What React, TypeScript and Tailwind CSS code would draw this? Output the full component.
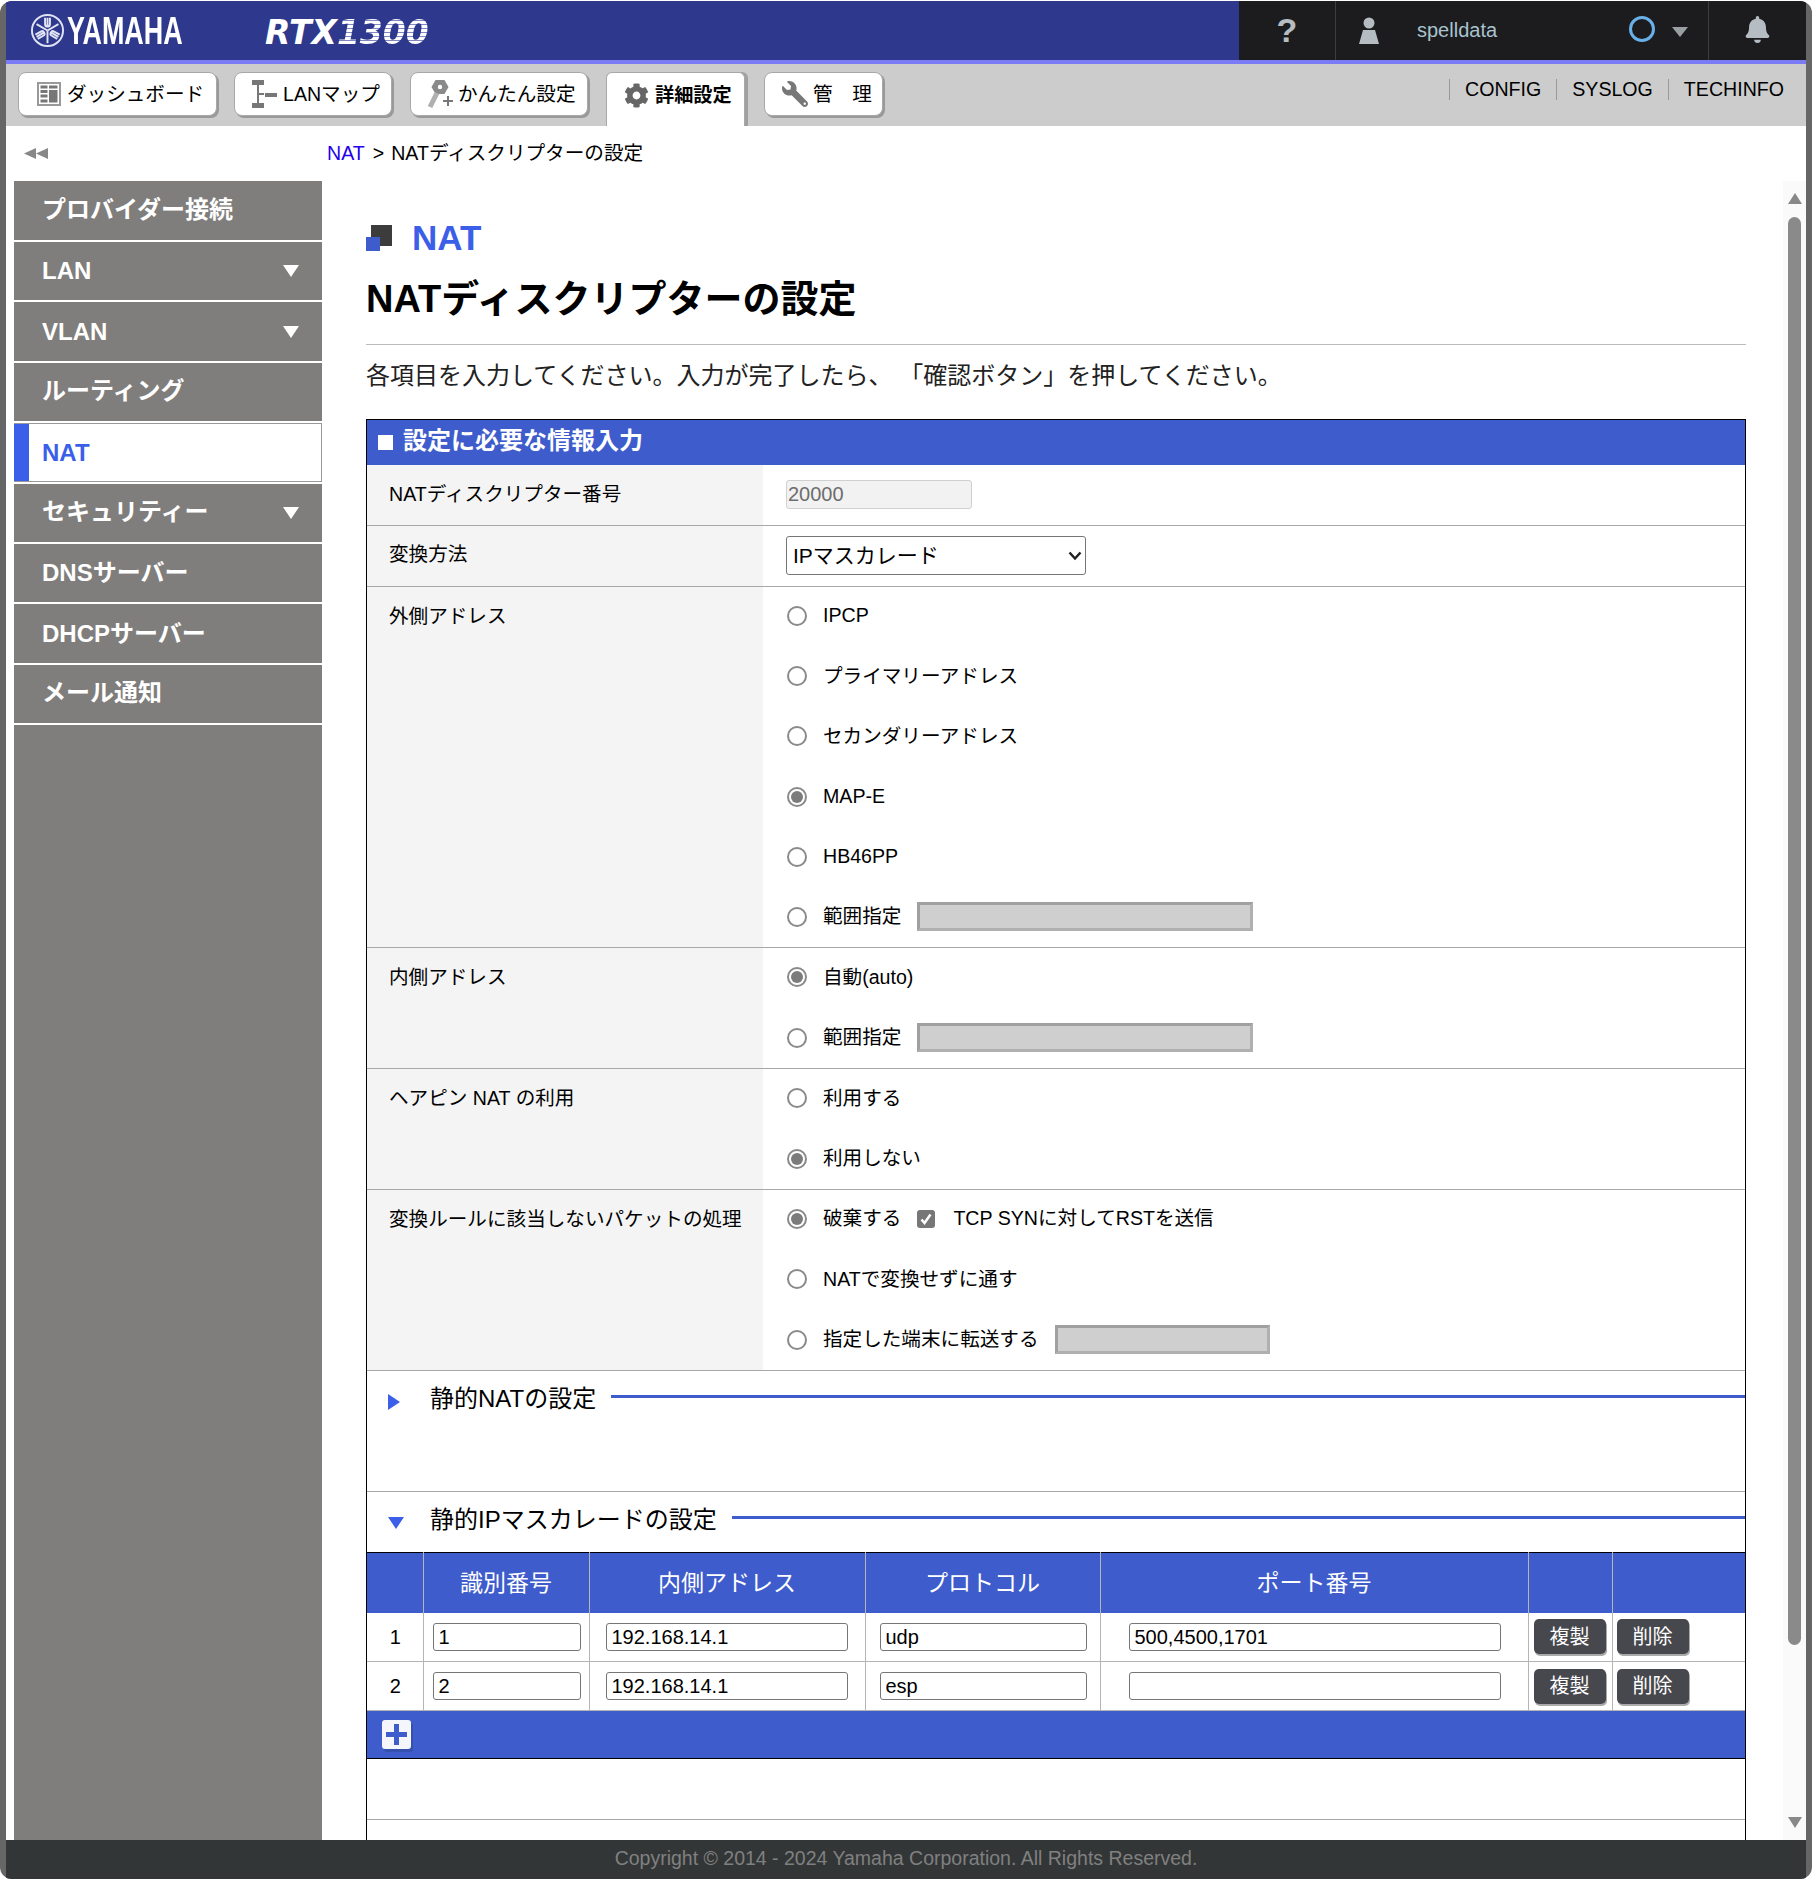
import React from "react";
import { FaCog, FaWrench, FaBell } from "react-icons/fa";

const Tab = ({ w, children }: { w: string; children: React.ReactNode }) => (
  <div className={`${w} h-[44px] bg-white border border-[#a8a8a8] rounded-[8px] shadow-[2px_2px_0_#999] flex items-center text-[19.6px] text-black whitespace-nowrap`}>
    {children}
  </div>
);

const SideItem = ({ label, arrow, active, cjk }: { label: string; arrow?: boolean; active?: boolean; cjk?: boolean }) =>
  active ? (
    <div className="h-[60.4px] bg-white border-b-2 border-white">
      <div className="h-[58.4px] flex items-center border border-[#999] border-l-0 bg-white">
        <div className="w-[15px] h-full bg-[#3b5fe8]" />
        <span className="ml-[13px] pt-[2px] text-[24px] font-bold text-[#3b5fe8]">{label}</span>
      </div>
    </div>
  ) : (
    <div className="h-[60.4px] border-b-2 border-white flex items-center justify-between pl-[28px] pr-[23px]">
      <span className={`${cjk ? "pb-[2px]" : ""} text-[24px] font-bold text-white whitespace-nowrap`}>{label}</span>
      {arrow && <span className="w-0 h-0 border-x-[8px] border-t-[12px] border-x-transparent border-t-white" />}
    </div>
  );

const Radio = ({ checked }: { checked?: boolean }) => (
  <span className="w-[20px] h-[20px] shrink-0 rounded-full border-2 border-[#8a8a8a] bg-white flex items-center justify-center">
    {checked && <span className="w-[12px] h-[12px] rounded-full bg-[#7c7c7c]" />}
  </span>
);

const DisabledBox = ({ w }: { w: string }) => (
  <span className={`${w} h-[29px] block bg-[#cfcfcf] border-[3px] border-t-[#a0a0a0] border-l-[#a0a0a0] border-r-[#b0b0b0] border-b-[#b0b0b0]`} />
);

const Opt = ({ checked, children }: { checked?: boolean; children: React.ReactNode }) => (
  <div className="flex-1 flex items-center pl-[24px] gap-[16px] whitespace-nowrap">
    <Radio checked={checked} />
    {children}
  </div>
);

const Row = ({ h, label, children }: { h: string; label: string; children: React.ReactNode }) => (
  <div className={`${h} flex border-b border-[#a8a8a8]`}>
    <div className="w-[396px] bg-[#f4f4f4] pl-[22px] text-[19.6px] text-black h-full">
      <div className="h-[59px] flex items-center whitespace-nowrap">{label}</div>
    </div>
    <div className="flex-1 -mt-px flex flex-col text-[19.6px] text-black">{children}</div>
  </div>
);

const SectionTitle = ({ label, open }: { label: string; open?: boolean }) => (
  <div className="h-[58px] flex items-center pl-[21px]">
    {open ? (
      <span className="w-0 h-0 border-x-[8px] border-t-[12px] border-x-transparent border-t-[#3b5fe8] mt-[4px]" />
    ) : (
      <span className="w-0 h-0 border-y-[8px] border-l-[12px] border-y-transparent border-l-[#3b5fe8] mt-[4px] mr-[4px]" />
    )}
    <span className="ml-[26px] mb-[2px] text-[24px] text-black whitespace-nowrap">{label}</span>
    <span className="ml-[15px] flex-1 h-[3px] bg-[#3e5ccb] mb-[7px]" />
  </div>
);

const TextIn = ({ w, v }: { w: string; v: string }) => (
  <input
    readOnly
    defaultValue={v}
    className={`${w} h-[28px] block border border-[#767676] rounded-[3px] px-[5px] text-[20px] bg-white text-black`}
  />
);

const Btn = ({ label }: { label: string }) => (
  <button className="w-[72px] h-[35px] bg-[#47484e] rounded-[5px] shadow-[1px_2px_0_#aaa] text-white text-[20px] block">{label}</button>
);

const Th = ({ w, children }: { w: string; children?: React.ReactNode }) => (
  <th className={`${w} border-l border-[#b5b5b5] first:border-l-0 font-normal text-[23px] text-white text-center`}>{children}</th>
);

const DataRow = ({ n, id, addr, proto, port }: { n: string; id: string; addr: string; proto: string; port: string }) => (
  <tr className="h-[49px] border-b border-[#b5b5b5]">
    <td className="text-center text-[20px] text-black pl-[1px]">{n}</td>
    <td className="border-l border-[#b5b5b5] pl-[9px]"><TextIn w="w-[148px]" v={id} /></td>
    <td className="border-l border-[#b5b5b5] pl-[16px]"><TextIn w="w-[242px]" v={addr} /></td>
    <td className="border-l border-[#b5b5b5] pl-[14px]"><TextIn w="w-[207px]" v={proto} /></td>
    <td className="border-l border-[#b5b5b5] pl-[28px]"><TextIn w="w-[372px]" v={port} /></td>
    <td className="border-l border-[#b5b5b5] pl-[5px]"><Btn label="複製" /></td>
    <td className="border-l border-[#b5b5b5] pl-[4px]"><Btn label="削除" /></td>
  </tr>
);

export default function App() {
  return (
    <div className="w-[1812px] h-[1879px] pt-px bg-white overflow-hidden font-['Liberation_Sans','Noto_Sans_CJK_JP',sans-serif]">
      <div className="h-full rounded-[12px] bg-[#666] px-[6px] flex flex-col overflow-hidden">
        {/* top bar */}
        <header className="h-[59px] shrink-0 flex">
          <div className="w-[1233px] bg-[#2e388c] flex items-center">
            <svg width="35" height="35" viewBox="0 0 36 36" className="ml-[24px] shrink-0" fill="none" stroke="#dfe3f3">
              <circle cx="18" cy="18" r="16" strokeWidth="2" />
              <g strokeWidth="2">
                <path d="M18 18V31M15.5 5v6.5q0 2.5 2.5 2.5t2.5-2.5V5M18 5v9" />
                <path d="M18 18V31M15.5 5v6.5q0 2.5 2.5 2.5t2.5-2.5V5M18 5v9" transform="rotate(120 18 18)" />
                <path d="M18 18V31M15.5 5v6.5q0 2.5 2.5 2.5t2.5-2.5V5M18 5v9" transform="rotate(240 18 18)" />
              </g>
            </svg>
            <div className="w-[118px] ml-[2px] shrink-0">
              <span className="block text-[39px] leading-none font-bold text-white origin-left scale-x-[0.69] whitespace-nowrap">YAMAHA</span>
            </div>
            <div className="ml-[80px] mt-[3px] font-['DejaVu_Sans',sans-serif] font-bold italic text-[33px] leading-none text-white whitespace-nowrap">
              RTX<span className="bg-[repeating-linear-gradient(180deg,#ffffff_0px,#ffffff_3px,#7f86c0_3px,#7f86c0_4px)] bg-clip-text text-transparent">1300</span>
            </div>
          </div>
          <div className="flex-1 bg-[#1c1c1e] flex items-center">
            <div className="w-[97px] h-full border-r border-[#3d3d40] flex items-center justify-center text-[34px] font-bold text-[#b5bcc2]">?</div>
            <div className="flex-1 h-full flex items-center border-r border-[#3d3d40]">
              <svg width="20" height="27" viewBox="0 0 20 27" className="ml-[23px]" fill="#b5bcc2">
                <circle cx="10" cy="6" r="5.5" />
                <path d="M4 13h12l4 14H0z" />
              </svg>
              <span className="ml-[38px] mb-[2px] text-[20px] text-[#a9c3cf]">spelldata</span>
              <span className="ml-[132px] mb-[3px] w-[26px] h-[26px] rounded-full border-[3px] border-[#6ab0e8]" />
              <span className="ml-[17px] mt-[2px] w-0 h-0 border-x-[8px] border-t-[10px] border-x-transparent border-t-[#9a9fa4]" />
            </div>
            <div className="w-[97px] h-full flex items-center justify-center">
              <FaBell className="text-[#b5bcc2] w-[25px] h-[27px] mb-[2px]" />
            </div>
          </div>
        </header>
        <div className="h-[4px] shrink-0 bg-[#7b7bf5]" />

        {/* nav */}
        <nav className="h-[62px] shrink-0 bg-[#cccccc] flex justify-between">
          <div className="flex pl-[12px] pt-[8px] items-start">
            <Tab w="w-[199px]">
              <svg width="24" height="24" viewBox="0 0 24 24" className="ml-[18px] mr-[6px]" fill="#777">
                <path fillRule="evenodd" d="M0 0h24v24H0zM2 2v20h20V2z" fill="#999" />
                <path d="M3.5 3.5h7v3h-7zM12 3.5h8.500v3H12zM3.500 8h7v3h-7zM3.500 12.500h7v3h-7zM3.500 17.500h7v3h-7zM12 8h8.500v12.500H12z" />
              </svg>
              <span className="pt-px">ダッシュボード</span>
            </Tab>
            <div className="w-[17px]" />
            <Tab w="w-[158px]">
              <svg width="25" height="28" viewBox="0 0 25 28" className="ml-[17px] mr-[6px]" fill="#777">
                <path d="M0 0h12v5H0zM5 5h2v18H5zM7 13h5v2H7zM13 13h12v4H13zM0 23h12v5H0z" />
              </svg>
              <span className="pt-px">LANマップ</span>
            </Tab>
            <div className="w-[18px]" />
            <Tab w="w-[178px]">
              <svg width="27" height="30" viewBox="0 0 27 30" className="ml-[16px] mr-[4px]">
                <path d="M8.500 1h9l4 7-4 7h-9l-4-7z" fill="#8a8a8a" />
                <circle cx="13" cy="8" r="2.200" fill="#fff" />
                <path d="M10 14L3 28" stroke="#b0b0b0" strokeWidth="5" />
                <path d="M21 17v10M16 22h10" stroke="#777" strokeWidth="2" />
              </svg>
              <span className="pt-px">かんたん設定</span>
            </Tab>
            <div className="w-[18px]" />
            <div className="w-[139px] h-[54px] bg-white border-t border-x border-[#a8a8a8] rounded-t-[6px] shadow-[3px_0_0_#a0a0a0] flex items-start pt-[9px] text-[19.2px] font-bold text-black whitespace-nowrap">
              <FaCog className="ml-[17px] mr-[6px] mt-px w-[25px] h-[25px] text-[#666]" />
              詳細設定
            </div>
            <div className="w-[19px]" />
            <Tab w="w-[119px]">
              <FaWrench className="ml-[17px] mr-[5px] w-[26px] h-[26px] text-[#777] scale-x-[-1]" />
              <span className="pt-px">管　理</span>
            </Tab>
          </div>
          <div className="flex pt-[15px] pr-[22px] items-start text-[19.6px] text-black">
            <span className="border-l border-[#999] h-[21px] leading-[21px] pl-[15px] pr-[15px]">CONFIG</span>
            <span className="border-l border-[#999] h-[21px] leading-[21px] pl-[15px] pr-[15px]">SYSLOG</span>
            <span className="border-l border-[#999] h-[21px] leading-[21px] pl-[15px]">TECHINFO</span>
          </div>
        </nav>

        {/* body */}
        <div className="flex-1 min-h-0 flex bg-white">
          <aside className="w-[316px] shrink-0 flex flex-col">
            <div className="h-[55px] shrink-0 flex items-center pl-[18px]">
              <svg width="24" height="11" viewBox="0 0 24 11" fill="#888">
                <path d="M12 0v11L0 5.500zM24 0v11L12 5.500z" />
              </svg>
            </div>
            <div className="flex-1 ml-[8px] pt-[0.6px] bg-[#807e7c]">
              <SideItem label="プロバイダー接続" cjk />
              <SideItem label="LAN" arrow />
              <SideItem label="VLAN" arrow />
              <SideItem label="ルーティング" cjk />
              <SideItem label="NAT" active />
              <SideItem label="セキュリティー" arrow cjk />
              <SideItem label="DNSサーバー" />
              <SideItem label="DHCPサーバー" />
              <SideItem label="メール通知" cjk />
            </div>
          </aside>

          <main className="flex-1 min-w-0 flex flex-col">
            <div className="h-[55px] shrink-0 flex items-center pl-[5px] text-[19.6px] text-black whitespace-nowrap">
              <span className="text-[#2200ee]">NAT</span>
              <span className="ml-[8px]">&gt;</span>
              <span className="ml-[7px]">NATディスクリプターの設定</span>
            </div>
            <div className="flex-1 min-h-0 flex">
              <div className="flex-1 min-w-0 overflow-hidden pl-[44px]">
                <div className="w-[1380px]">
                  <div className="pt-[33px] h-[79px] flex items-center">
                    <svg width="26" height="26" viewBox="0 0 26 26" className="shrink-0 mt-px">
                      <path d="M5 0h21v21H14v-9H5z" fill="#3c3c3c" />
                      <path d="M0 12h14v14H0z" fill="#3e5ccb" />
                    </svg>
                    <span className="ml-[20px] text-[35px] font-bold text-[#3b5fe8] leading-none">NAT</span>
                  </div>
                  <div className="h-[80px] pb-[2px] flex items-center text-[38px] font-bold text-black whitespace-nowrap">NATディスクリプターの設定</div>
                  <div className="mt-[4px] h-px bg-[#bbbbbb]" />
                  <div className="h-[62px] flex items-center text-[24px] text-[#222] whitespace-nowrap">各項目を入力してください。入力が完了したら、 「確認ボタン」を押してください。</div>
                  <div className="mt-[12px] border border-b-0 border-black">
                    <div className="h-[45px] bg-[#3e5ccb] flex items-center pl-[11px]">
                      <span className="w-[15px] h-[15px] bg-white" />
                      <span className="ml-[10px] mb-[4px] text-[24px] font-bold text-white">設定に必要な情報入力</span>
                    </div>
                    <Row h="h-[60.5px]" label="NATディスクリプター番号">
                      <div className="h-full pl-[23px] flex items-center">
                        <input
                          readOnly
                          defaultValue="20000"
                          className="w-[186px] h-[29px] border border-[#d0d0d0] rounded-[3px] bg-[#f2f2f2] px-px text-[20px] text-[#6d6d6d]"
                        />
                      </div>
                    </Row>
                    <Row h="h-[61.5px]" label="変換方法">
                      <div className="h-full pl-[23px] flex items-center">
                        <div className="relative w-[300px] h-[39px]">
                          <select
                            defaultValue="ip"
                            className="w-full h-full appearance-none border border-[#767676] rounded-[3px] bg-white pl-[6px] text-[21px] text-black"
                          >
                            <option value="ip">IPマスカレード</option>
                          </select>
                          <svg width="14" height="10" viewBox="0 0 14 10" fill="none" stroke="#222" strokeWidth="2.500" className="absolute right-[4px] top-[15px] pointer-events-none">
                            <path d="M1.500 1.500L7 7.500l5.500-6" />
                          </svg>
                        </div>
                      </div>
                    </Row>
                    <Row h="h-[361px]" label="外側アドレス">
                      <Opt>IPCP</Opt>
                      <Opt>プライマリーアドレス</Opt>
                      <Opt>セカンダリーアドレス</Opt>
                      <Opt checked>MAP-E</Opt>
                      <Opt>HB46PP</Opt>
                      <Opt>範囲指定<DisabledBox w="w-[336px]" /></Opt>
                    </Row>
                    <Row h="h-[121px]" label="内側アドレス">
                      <Opt checked>自動(auto)</Opt>
                      <Opt>範囲指定<DisabledBox w="w-[336px]" /></Opt>
                    </Row>
                    <Row h="h-[121px]" label="ヘアピン NAT の利用">
                      <Opt>利用する</Opt>
                      <Opt checked>利用しない</Opt>
                    </Row>
                    <Row h="h-[181px]" label="変換ルールに該当しないパケットの処理">
                      <Opt checked>
                        破棄する
                        <span className="w-[18px] h-[18px] rounded-[3px] bg-[#777] flex items-center justify-center">
                          <svg width="12" height="12" viewBox="0 0 12 12" fill="none" stroke="#fff" strokeWidth="2.500">
                            <path d="M1.500 6.500l3 3.500 6-8.500" />
                          </svg>
                        </span>
                        <span className="ml-[2px]">TCP SYNに対してRSTを送信</span>
                      </Opt>
                      <Opt>NATで変換せずに通す</Opt>
                      <Opt>指定した端末に転送する<DisabledBox w="w-[215px]" /></Opt>
                    </Row>
                    <div className="h-[121px] border-b border-[#a8a8a8]">
                      <SectionTitle label="静的NATの設定" />
                    </div>
                    <SectionTitle label="静的IPマスカレードの設定" open />
                    <div className="h-[2px]" />
                    <table className="w-[1378px] table-fixed border-collapse border-t border-b border-black">
                      <thead>
                        <tr className="h-[60px] bg-[#3e5ccb]">
                          <Th w="w-[56px]" />
                          <Th w="w-[166px]">識別番号</Th>
                          <Th w="w-[276px]">内側アドレス</Th>
                          <Th w="w-[235px]">プロトコル</Th>
                          <Th w="w-[428px]">ポート番号</Th>
                          <Th w="w-[84px]" />
                          <Th w="w-[133px]" />
                        </tr>
                      </thead>
                      <tbody>
                        <DataRow n="1" id="1" addr="192.168.14.1" proto="udp" port="500,4500,1701" />
                        <DataRow n="2" id="2" addr="192.168.14.1" proto="esp" port="" />
                        <tr className="h-[48px] bg-[#3e5ccb]">
                          <td colSpan={7} className="pl-[15px]">
                            <div className="w-[29px] h-[29px] bg-[#f4f6fb] rounded-[3px] shadow-[2px_3px_0_#3650ad] flex items-center justify-center">
                              <svg width="21" height="21" viewBox="0 0 21 21" fill="#3e5ccb">
                                <path d="M8 0h5v8h8v5h-8v8H8v-8H0V8h8z" />
                              </svg>
                            </div>
                          </td>
                        </tr>
                      </tbody>
                    </table>
                    <div className="h-[61px] border-b border-[#a8a8a8]" />
                    <div className="h-[40px]" />
                  </div>
                </div>
              </div>
              <div className="w-[23px] shrink-0 bg-[#fafafa] flex flex-col items-center">
                <span className="mt-[12px] w-0 h-0 border-x-[7px] border-b-[11px] border-x-transparent border-b-[#888]" />
                <span className="mt-[13px] w-[13px] h-[1428px] rounded-full bg-[#8a8a8a]" />
                <span className="mt-[172px] w-0 h-0 border-x-[7px] border-t-[11px] border-x-transparent border-t-[#888]" />
              </div>
            </div>
          </main>
        </div>

        {/* footer */}
        <footer className="h-[39px] shrink-0 pb-px bg-[#333637] flex items-center justify-center text-[19.5px] text-[#808080] whitespace-nowrap">
          Copyright © 2014 - 2024 Yamaha Corporation. All Rights Reserved.
        </footer>
      </div>
    </div>
  );
}
